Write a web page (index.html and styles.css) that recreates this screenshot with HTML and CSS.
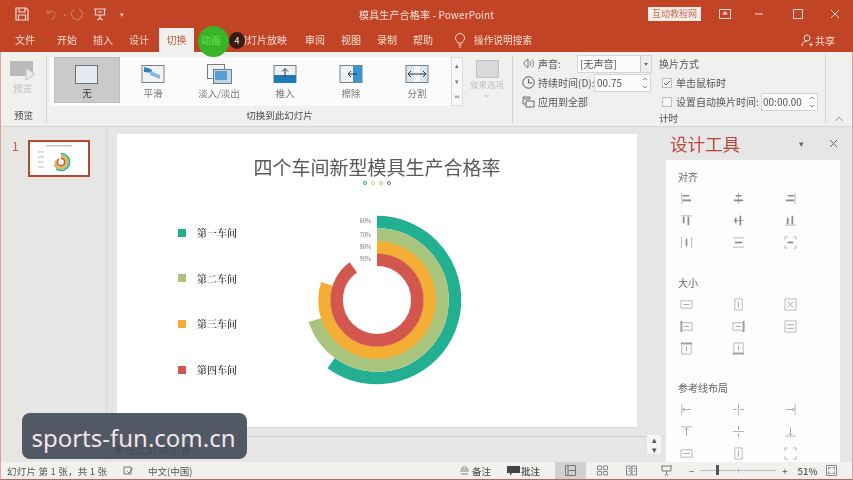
FILE: index.html
```html
<!DOCTYPE html>
<html lang="zh-CN">
<head>
<meta charset="utf-8">
<title>模具生产合格率 - PowerPoint</title>
<link rel="stylesheet" href="styles.css">
</head>
<body>
<div class="app">
  <header class="titlebar">
    <div class="qat">
      <svg class="q-save" width="14" height="14" viewBox="0 0 14 14"><path d="M1 1h10l2 2v10H1zM4 1v4h6V1M3.500 13V8h7v5" fill="none" stroke="#f6dcd4" stroke-width="1.200"/></svg>
      <svg class="q-undo" width="14" height="14" viewBox="0 0 14 14"><path d="M3 2v4h4M3 6c3-3 9-2 8 3-.4 2-2 3-4 4" fill="none" stroke="#cf6a50" stroke-width="1.300"/></svg>
      <span class="q-sep">·</span>
      <svg class="q-redo" width="14" height="14" viewBox="0 0 14 14"><path d="M9 2a5.500 5.500 0 1 1-5 .5" fill="none" stroke="#d4765c" stroke-width="1.300"/></svg>
      <svg class="q-show" width="14" height="14" viewBox="0 0 14 14"><path d="M1 2h12M2.500 2v6h9V2M7 8v3M4.500 13 7 11l2.500 2M5 5h4" fill="none" stroke="#f6dcd4" stroke-width="1.200"/></svg>
      <span class="q-more">▾</span>
    </div>
    <div class="doc-title">模具生产合格率 - PowerPoint</div>
    <div class="win">
      <span class="login">互动教程网</span>
      <svg class="w-rb" width="12" height="10" viewBox="0 0 12 10"><path d="M.500.500h11v9H.500z" fill="none" stroke="#f6dcd4"/><path d="M6 2 9 5.500H3z" fill="#f6dcd4"/></svg>
      <svg class="w-min" width="10" height="10" viewBox="0 0 10 10"><path d="M1 5h8" stroke="#f6dcd4"/></svg>
      <svg class="w-max" width="10" height="10" viewBox="0 0 10 10"><path d="M.500.500h9v9h-9z" fill="none" stroke="#f6dcd4"/></svg>
      <svg class="w-close" width="10" height="10" viewBox="0 0 10 10"><path d="m1 1 8 8M9 1l-8 8" stroke="#f6dcd4"/></svg>
    </div>
  </header>

  <nav class="tabs">
    <span class="tab tab-file">文件</span>
    <span class="tab">开始</span>
    <span class="tab">插入</span>
    <span class="tab">设计</span>
    <span class="tab tab-active">切换</span>
    <span class="tab tab-anim"><i class="spot"></i><b class="tab-anim-text">动画</b></span>
    <span class="tab tab-show"><i class="badge">4</i>幻灯片放映</span>
    <span class="tab">审阅</span>
    <span class="tab">视图</span>
    <span class="tab">录制</span>
    <span class="tab">帮助</span>
    <svg class="bulb" width="12" height="15" viewBox="0 0 12 15"><path d="M4 10C3 8 1.500 7.500 1.500 5a4.500 4.500 0 0 1 9 0c0 2.500-1.500 3-2.500 5zM4.500 12h3M5 14h2" fill="none" stroke="#f6dcd4"/></svg>
    <span class="search">操作说明搜索</span>
    <span class="share">
      <svg width="13" height="13" viewBox="0 0 13 13"><path d="M6 1a3 3 0 1 1 0 6 3 3 0 0 1 0-6M1 12c0-3 2-5 5-5M8 10.500h4M10 8.500v4" fill="none" stroke="#f6dcd4"/></svg>共享
    </span>
  </nav>

  <section class="ribbon">
    <div class="group group-preview">
      <div class="group-body preview-body">
        <svg width="26" height="22" viewBox="0 0 26 22"><rect x="0" y="1" width="23" height="15" fill="#b9bbbb"/><path d="M16 8v12l9-6z" fill="#e8ecec" stroke="#bcc0c0"/></svg>
        <span class="dim">预览</span>
      </div>
      <div class="group-label">预览</div>
    </div>
    <div class="group group-trans">
      <div class="group-body trans-body">
        <div class="gallery">
          <div class="g-item g-selected">
            <svg width="34" height="26" viewBox="0 0 34 26"><rect x="10.500" y="5.500" width="22" height="18" transform="translate(-5 -1)" fill="#e4ecf1" stroke="#6c7278"/></svg>
            <span>无</span>
          </div>
          <div class="g-item">
            <svg width="34" height="26" viewBox="0 0 34 26"><rect x="6" y="4.500" width="22" height="17" fill="#f1f4f5" stroke="#7a8186"/><path d="m8 6 7 2 2 4-9-1z" fill="#2f7fb8"/><path d="m14 10 10 4v4l-10-4z" fill="#86b9dc"/></svg>
            <span>平滑</span>
          </div>
          <div class="g-item">
            <svg width="34" height="26" viewBox="0 0 34 26"><rect x="5.500" y="3.500" width="17" height="14" fill="#f1f4f5" stroke="#757b80"/><rect x="11.500" y="8.500" width="18" height="14" fill="#bcd7ea" stroke="#757b80"/><rect x="13" y="10" width="12" height="9" fill="#5a9fd2"/></svg>
            <span>淡入/淡出</span>
          </div>
          <div class="g-item">
            <svg width="34" height="26" viewBox="0 0 34 26"><rect x="6" y="4.500" width="22" height="17" fill="#eef2f4" stroke="#7a8186"/><rect x="6" y="14" width="22" height="8" fill="#1f7ab8"/><path d="M17 16V8M14 10.500 17 7.500l3 3" fill="none" stroke="#333"/></svg>
            <span>推入</span>
          </div>
          <div class="g-item">
            <svg width="34" height="26" viewBox="0 0 34 26"><rect x="6" y="4.500" width="22" height="17" fill="#eef2f4" stroke="#7a8186"/><rect x="19" y="5" width="9" height="16" fill="#3d93cf"/><path d="M23 13h-9M17 10l-3 3 3 3" fill="none" stroke="#333"/></svg>
            <span>擦除</span>
          </div>
          <div class="g-item">
            <svg width="34" height="26" viewBox="0 0 34 26"><rect x="6" y="4.500" width="22" height="17" fill="#d8e7f1" stroke="#7a8186"/><rect x="14" y="5" width="6" height="16" fill="#f4f7f8"/><path d="M8 13h18M11 10l-3 3 3 3M23 10l3 3-3 3" fill="none" stroke="#333"/></svg>
            <span>分割</span>
          </div>
        </div>
        <div class="g-scroll">
          <span>▴</span><span>▾</span><span>≂</span>
        </div>
        <div class="effect">
          <i class="effect-box"></i>
          <span class="dim">效果选项</span>
          <span class="dim effect-caret">⌄</span>
        </div>
      </div>
      <div class="group-label">切换到此幻灯片</div>
    </div>
    <div class="group group-timing">
      <div class="timing-body">
        <div class="sound">
          <div class="row">
            <svg class="ico" width="13" height="13" viewBox="0 0 13 13"><path d="M6 2v9L2 7.500V5.500zM8 4c1 1 1 4 0 5M10 2.500c2 2 2 6 0 8" fill="none" stroke="#777"/></svg>
            <span class="lab lab-sound">声音:</span>
            <span class="combo">[无声音]<svg class="combo-arrow" width="11" height="16" viewBox="0 0 11 16"><path d="M3.500 7h4L5.500 10z" fill="#555"/></svg></span>
          </div>
          <div class="row">
            <svg class="ico" width="13" height="13" viewBox="0 0 13 13"><circle cx="6.500" cy="6.500" r="5.700" fill="none" stroke="#555"/><path d="M6.500 3v4H10" fill="none" stroke="#555"/></svg>
            <span class="lab lab-dur">持续时间(D):</span>
            <span class="spin spin-dur">00.75<svg class="spin-arrows" width="8" height="14" viewBox="0 0 8 14"><path d="m2 4 2-2 2 2M2 10l2 2 2-2" fill="none" stroke="#888"/></svg></span>
          </div>
          <div class="row">
            <svg class="ico" width="13" height="13" viewBox="0 0 13 13"><path d="M1 2h7v2H1zM1 5v4h3M4 6h8v6H4z" fill="#eef0f0" stroke="#666"/></svg>
            <span class="lab">应用到全部</span>
          </div>
        </div>
        <div class="advance">
          <div class="adv-title">换片方式</div>
          <div class="row adv-row">
            <i class="check"><svg width="10" height="10" viewBox="0 0 10 10"><path d="m2 5 2 2 4-4" fill="none" stroke="#555"/></svg></i>
            <span class="lab">单击鼠标时</span>
          </div>
          <div class="row adv-row">
            <i class="check"></i>
            <span class="lab lab-auto">设置自动换片时间:</span>
            <span class="spin spin-auto">00:00.00<svg class="spin-arrows" width="8" height="14" viewBox="0 0 8 14"><path d="m2 4 2-2 2 2M2 10l2 2 2-2" fill="none" stroke="#888"/></svg></span>
          </div>
          <div class="group-label timing-label">计时</div>
        </div>
      </div>
    </div>
    <div class="collapse">
      <svg width="10" height="6" viewBox="0 0 10 6"><path d="m1 5 4-4 4 4" fill="none" stroke="#999"/></svg>
    </div>
  </section>

  <main class="work">
    <aside class="thumbs">
      <span class="thumb-no">1</span>
      <div class="thumb">
        <svg width="58" height="33" viewBox="0 0 58 33">
          <rect x="16" y="3" width="26" height="1.500" fill="#c4c4c4"/>
          <path d="M8 10h6M8 15h6M8 20h6M8 25h6" stroke="#bbb"/>
          <g fill="none" stroke-width="1.700" transform="rotate(-90 31 20)">
            <circle cx="31" cy="20" r="8.500" stroke="#23b092" pathLength="100" stroke-dasharray="60 100"/>
            <circle cx="31" cy="20" r="6.900" stroke="#a9c47c" pathLength="100" stroke-dasharray="70 100"/>
            <circle cx="31" cy="20" r="5.300" stroke="#f4ae35" pathLength="100" stroke-dasharray="80 100"/>
            <circle cx="31" cy="20" r="3.700" stroke="#d4574f" pathLength="100" stroke-dasharray="90 100"/>
          </g>
        </svg>
      </div>
    </aside>

    <div class="center">
      <div class="stage">
        <article class="slide">
          <h1 class="slide-title">四个车间新型模具生产合格率</h1>
          <div class="dots">
            <i class="dot dot-a"></i><i class="dot dot-b"></i><i class="dot dot-c"></i><i class="dot dot-d"></i>
          </div>
          <div class="slide-body">
            <ul class="legend">
              <li><i class="sw sw-a"></i>第一车间</li>
              <li><i class="sw sw-b"></i>第二车间</li>
              <li><i class="sw sw-c"></i>第三车间</li>
              <li><i class="sw sw-d"></i>第四车间</li>
            </ul>
            <svg class="chart" width="200" height="200" viewBox="0 0 200 200">
              <g fill="none" transform="rotate(-90 100 100)">
                <circle cx="100" cy="100" r="78" stroke="#23b092" stroke-width="12.500" pathLength="100" stroke-dasharray="60 100"/>
                <circle cx="100" cy="100" r="65" stroke="#a9c47c" stroke-width="13.500" pathLength="100" stroke-dasharray="70 100"/>
                <circle cx="100" cy="100" r="52.500" stroke="#f4ae35" stroke-width="12.500" pathLength="100" stroke-dasharray="80 100"/>
                <circle cx="100" cy="100" r="40.300" stroke="#d4574f" stroke-width="12.500" pathLength="100" stroke-dasharray="90 100"/>
              </g>
              <g class="chart-pct">
                <text x="94" y="23">60%</text>
                <text x="94" y="37">70%</text>
                <text x="94" y="49">80%</text>
                <text x="94" y="61">90%</text>
              </g>
            </svg>
          </div>
        </article>
        <div class="v-scroll"><span>▴</span><span>▾</span></div>
      </div>
      <div class="notes">单击此处添加备注</div>
    </div>

    <aside class="pane">
      <div class="pane-head">
        <span class="pane-title">设计工具</span>
        <span class="pane-drop">▾</span>
        <svg class="pane-x" width="9" height="9" viewBox="0 0 9 9"><path d="m1 1 7 7M8 1 1 8" stroke="#666"/></svg>
      </div>
      <div class="pane-body">
        <section class="tool-sec">
          <h2>对齐</h2>
          <div class="tool-grid">
            <svg viewBox="0 0 14 14"><path d="M2 1v12" class="l"/><path d="M3 4h7M3 9h9" class="b"/></svg>
            <svg viewBox="0 0 14 14"><path d="M7 1v12" class="l"/><path d="M4 4h6M2 9h10" class="b"/></svg>
            <svg viewBox="0 0 14 14"><path d="M12 1v12" class="l"/><path d="M4 4h7M2 9h9" class="b"/></svg>
            <svg viewBox="0 0 14 14"><path d="M1 2h12" class="l"/><path d="M4 3v7M9 3v9" class="b"/></svg>
            <svg viewBox="0 0 14 14"><path d="M1 7h12" class="l"/><path d="M4 4v6M9 2v10" class="b"/></svg>
            <svg viewBox="0 0 14 14"><path d="M1 12h12" class="l"/><path d="M4 4v7M9 2v9" class="b"/></svg>
            <svg viewBox="0 0 14 14"><path d="M1.500 1v12M12.500 1v12" class="l"/><path d="M7 3v8" class="b"/></svg>
            <svg viewBox="0 0 14 14"><path d="M1 2h12M1 12h12" class="l"/><path d="M3 7h8" class="b"/></svg>
            <svg viewBox="0 0 14 14"><path d="M1 4V1h3M10 1h3v3M13 10v3h-3M4 13H1v-3" class="l"/><path d="M4 7h6" class="b"/></svg>
          </div>
        </section>
        <section class="tool-sec">
          <h2>大小</h2>
          <div class="tool-grid">
            <svg viewBox="0 0 14 14"><path d="M1 3h12v8H1z" class="l"/><path d="M3.500 7h7" class="a"/></svg>
            <svg viewBox="0 0 14 14"><path d="M3 1h8v12H3z" class="l"/><path d="M7 3.500v7" class="a"/></svg>
            <svg viewBox="0 0 14 14"><path d="M1 1h12v12H1z" class="l"/><path d="m4 4 6 6M10 4l-6 6" class="a"/></svg>
            <svg viewBox="0 0 14 14"><path d="M1.500 1v12" class="b"/><path d="M2 3h11v8H2z" class="l"/><path d="M10 7H4.500" class="a"/></svg>
            <svg viewBox="0 0 14 14"><path d="M12.500 1v12" class="b"/><path d="M1 3h11v8H1z" class="l"/><path d="M4 7h5.500" class="a"/></svg>
            <svg viewBox="0 0 14 14"><path d="M1 1h12v12H1z" class="l"/><path d="M3 5h8M3 9h8" class="a"/></svg>
            <svg viewBox="0 0 14 14"><path d="M1 1.500h12" class="b"/><path d="M2 2h10v11H2z" class="l"/><path d="M7 10V4.500" class="a"/></svg>
            <svg viewBox="0 0 14 14"><path d="M1 12.500h12" class="b"/><path d="M2 1h10v11H2z" class="l"/><path d="M7 4v5.500" class="a"/></svg>
          </div>
        </section>
        <section class="tool-sec">
          <h2>参考线布局</h2>
          <div class="tool-grid">
            <svg viewBox="0 0 14 14"><path d="M2 1v12" class="l"/><path d="M12 7H3M5 5 3 7l2 2" class="a"/></svg>
            <svg viewBox="0 0 14 14"><path d="M7 1v12" class="l"/><path d="M1 7h4M9 7h4" class="a"/></svg>
            <svg viewBox="0 0 14 14"><path d="M12 1v12" class="l"/><path d="M2 7h9M9 5l2 2-2 2" class="a"/></svg>
            <svg viewBox="0 0 14 14"><path d="M1 2h12" class="l"/><path d="M7 12V3M5 5l2-2 2 2" class="a"/></svg>
            <svg viewBox="0 0 14 14"><path d="M1 7h12" class="l"/><path d="M7 1v4M7 9v4" class="a"/></svg>
            <svg viewBox="0 0 14 14"><path d="M1 12h12" class="l"/><path d="M7 2v9M5 9l2 2 2-2" class="a"/></svg>
            <svg viewBox="0 0 14 14"><path d="M1 3h12v8H1z" class="l"/><path d="M3.500 7h7" class="a"/></svg>
            <svg viewBox="0 0 14 14"><path d="M3 1h8v12H3z" class="l"/><path d="M7 3.500v7" class="a"/></svg>
            <svg viewBox="0 0 14 14"><path d="M1 4V1h3M10 1h3v3M13 10v3h-3M4 13H1v-3" class="l"/></svg>
          </div>
        </section>
      </div>
    </aside>
  </main>

  <footer class="status">
    <span class="st-pos">幻灯片 第 1 张，共 1 张</span>
    <svg class="st-spell" width="11" height="11" viewBox="0 0 11 11"><path d="M1 2h7v7H1zM4 6l2 2 4-5" fill="none" stroke="#777"/></svg>
    <span class="st-lang">中文(中国)</span>
    <span class="st-notes">
      <svg width="9" height="9" viewBox="0 0 9 9"><path d="M4.500 0 1 3h7zM0 5h9M1 8h7" fill="none" stroke="#888"/></svg>备注
    </span>
    <span class="st-comments">
      <svg width="13" height="10" viewBox="0 0 13 10"><path d="M0 0h13v7H5L3 10V7H0z" fill="#444"/></svg>批注
    </span>
    <span class="view view-on"><svg width="11" height="11" viewBox="0 0 11 11"><path d="M.500.500h10v10H.500zM3 .500v10M3 5.500h7" fill="none" stroke="#777"/></svg></span>
    <span class="view"><svg width="11" height="11" viewBox="0 0 11 11"><path d="M.500 1h4v3.500h-4zM6.500 1h4v3.500h-4zM.500 6.500h4V10h-4zM6.500 6.500h4V10h-4z" fill="none" stroke="#888"/></svg></span>
    <span class="view"><svg width="11" height="11" viewBox="0 0 11 11"><path d="M.500 1h4.500v9H.500zM6 1h4.500v9H6zM2 3.500h2M2 6h2M7.500 3.500h2M7.500 6h2" fill="none" stroke="#888"/></svg></span>
    <span class="view view-show"><svg width="11" height="11" viewBox="0 0 11 11"><path d="M0 1h11M1 1v5h9V1M5.500 6v3M3.500 10.500l2-1.500 2 1.500" fill="none" stroke="#777"/></svg></span>
    <span class="zoom-minus">−</span>
    <span class="slider"><i class="tick"></i><i class="knob"></i></span>
    <span class="zoom-plus">+</span>
    <span class="zoom-val">51%</span>
    <svg class="st-fit" width="11" height="11" viewBox="0 0 11 11"><path d="M.500.500h10v10H.500zM2.500 4.500v-2h2M6.500 2.500h2v2M8.500 6.500v2h-2M4.500 8.500h-2v-2" fill="none" stroke="#888"/></svg>
  </footer>
</div>
<div class="watermark">sports-fun.com.cn</div>
</body>
</html>
```

FILE: styles.css
```css
* { box-sizing: border-box; }
html, body { margin: 0; padding: 0; }
body {
  width: 853px;
  height: 480px;
  overflow: hidden;
  position: relative;
  background: #eee;
  font-family: "Noto Sans CJK SC", "Liberation Sans", sans-serif;
  font-size: 10px;
  color: #444;
}
i { font-style: normal; }
.app {
  width: 853px;
  height: 480px;
  display: flex;
  flex-direction: column;
  filter: blur(.55px);
  border-left: 1px solid #d9a49a;
  border-right: 1px solid #d9a49a;
  border-bottom: 1px solid #b9695a;
}

/* title bar */
.titlebar {
  height: 28px;
  flex: none;
  margin: 0 -1px;
  background: #c04425;
  color: #f8e3dc;
  display: flex;
  align-items: center;
  position: relative;
}
.qat { display: flex; align-items: center; width: 359px; padding-left: 15px; }
.q-undo { margin-left: 15px; }
.q-sep { margin-left: 2px; color: #d4765c; width: 10px; }
.q-show { margin-left: 9px; }
.q-more { margin-left: 13px; font-size: 7px; color: #f0c8bc; }
.doc-title { width: 289px; font-size: 10px; letter-spacing: .15px; }
.win { display: flex; align-items: center; }
.login {
  width: 53px;
  height: 14px;
  line-height: 14px;
  background: #f7eeea;
  color: #c96a52;
  text-align: center;
  font-size: 9px;
}
.w-rb { margin-left: 18px; }
.w-min { margin-left: 23px; }
.w-max { margin-left: 29px; }
.w-close { margin-left: 27px; }

/* tabs */
.tabs {
  height: 24px;
  flex: none;
  margin: 0 -1px;
  padding-left: 7px;
  background: #c04425;
  color: #f6dcd4;
  display: flex;
  align-items: center;
}
.tab { padding: 0 8px; line-height: 24px; white-space: nowrap; position: relative; }
.tab-file { margin-right: 6px; }
.tab-active {
  margin-left: 2px;
  width: 35px;
  padding: 0 7.500px;
  background: #f0f0ee;
  color: #b85a42;
}
.tab-anim { padding: 0 7px; width: 36px; }
.tab-anim-text { position: relative; font-weight: 400; color: #6fdc5e; }
.spot {
  position: absolute;
  left: 4px;
  top: -2px;
  width: 31px;
  height: 31px;
  border-radius: 50%;
  background: #37b526;
}
.tab-show { padding-left: 7px; padding-right: 10px; }
.badge {
  position: absolute;
  left: -1px;
  top: 4px;
  width: 16px;
  height: 17px;
  line-height: 17px;
  text-align: center;
  border-radius: 50%;
  background: #381c14;
  color: #f4e8e2;
  font-size: 9px;
  z-index: 1;
}
.bulb { margin-left: 13px; }
.search { margin-left: 8px; font-size: 9.700px; }
.share { margin-left: auto; margin-right: 18px; display: flex; align-items: center; gap: 1px; }

/* ribbon */
.ribbon {
  height: 75px;
  flex: none;
  background: #f0f1ef;
  border-bottom: 1px solid #d6d6d4;
  display: flex;
  padding-top: 3px;
}
.group { display: flex; flex-direction: column; border-right: 1px solid #d5d6d4; margin-bottom: 3px; }
.group-body { flex: 1; min-height: 0; }
.group-label { height: 15px; line-height: 15px; text-align: center; color: #4a4a4a; font-size: 9.500px; }
.dim { color: #bcbfbf; font-size: 9.500px; }
.group-preview { width: 46px; }
.preview-body { display: flex; flex-direction: column; align-items: center; padding-top: 5px; padding-right: 2px; }
.preview-body span { margin-top: -1px; }
.group-trans { width: 466px; }
.trans-body { display: flex; padding-left: 3px; }
.gallery {
  width: 401px;
  height: 49px;
  margin-top: 2px;
  padding-left: 4px;
  background: #fbfbfb;
  display: flex;
}
.g-item {
  width: 66px;
  height: 46px;
  display: flex;
  flex-direction: column;
  align-items: center;
  padding-top: 4px;
  color: #777;
  font-size: 9.500px;
  line-height: 13px;
}
.g-selected { background: #c9cac9; color: #333; border: 1px solid #bcbdbc; padding-top: 3px; }
.g-scroll {
  width: 12px;
  height: 49px;
  margin-top: 2px;
  background: #f8f8f8;
  border: 1px solid #dcdcdc;
  display: flex;
  flex-direction: column;
  font-size: 7px;
  line-height: 15.600px;
  text-align: center;
  color: #777;
}
.effect { width: 46px; margin-left: 1px; display: flex; flex-direction: column; align-items: center; padding-top: 5px; font-size: 9px; }
.effect-box { width: 23px; height: 18px; background: #d8d9d9; border: 1px solid #c2c3c3; }
.effect span { line-height: 12px; font-size: 8.500px; }
.effect-caret { line-height: 6px !important; }

.group-timing { width: 313px; margin-top: -1px; }
.timing-body { display: flex; padding-left: 9px; flex: 1; }
.row { display: flex; align-items: center; height: 19px; }
.sound { width: 137px; }
.ico { flex: none; margin-right: 2px; }
.lab { color: #555; font-size: 10px; white-space: nowrap; margin-left: 1px; }
.lab-sound { width: 39px; }
.lab-dur { width: 56px; }
.combo, .spin {
  background: #fbfbfb;
  border: 1px solid #d4d4d4;
  height: 18px;
  line-height: 16px;
  padding-left: 2px;
  color: #555;
  font-size: 10px;
  position: relative;
  display: block;
}
.combo { width: 75px; }
.combo-arrow {
  position: absolute;
  right: 0;
  top: 0;
  border-left: 1px solid #c8c8c8;
  background: #ececec;
}
.spin-dur { width: 57px; }
.spin-arrows {
  position: absolute;
  right: 1px;
  top: 1px;
}
.advance { flex: 1; position: relative; display: flex; flex-direction: column; }
.adv-title { height: 19px; line-height: 19px; color: #555; }
.adv-row { padding-left: 3px; }
.check {
  width: 10px;
  height: 10px;
  background: #f6f6f6;
  border: 1px solid #bdbdbd;
  display: block;
  margin-right: 3px;
  flex: none;
  line-height: 0;
}
.check svg { margin: -1px; }
.lab-auto { width: 85px; }
.spin-auto { width: 57px; padding-left: 1px; }
.timing-label { text-align: left; margin-top: auto; }
.collapse { flex: 1; display: flex; align-items: flex-end; justify-content: center; padding-bottom: 4px; }

/* work area */
.work { flex: 1; min-height: 0; display: flex; background: #e6e6e5; }
.thumbs { width: 106px; flex: none; display: flex; padding: 13px 0 0 11px; border-right: 1px solid #dadada; }
.thumb-no { color: #c8553f; font-size: 12px; line-height: 12px; width: 16px; }
.thumb { width: 62px; height: 37px; background: #fff; border: 2px solid #b5482e; line-height: 0; }

.center { width: 558px; flex: none; display: flex; flex-direction: column; }
.stage { height: 310px; flex: none; padding: 7px 0 0 10px; display: flex; border-bottom: 1px solid #cfd3d0; }
.slide {
  width: 520px;
  height: 294px;
  background: #fff;
  border-bottom: 1px solid #d9d9d9;
  display: flex;
  flex-direction: column;
  align-items: stretch;
}
.slide-title {
  margin: 20px 0 0;
  font-size: 19px;
  line-height: 26px;
  font-weight: 400;
  color: #595959;
  text-align: center;
}
.dots { display: flex; justify-content: center; gap: 4px; margin-top: 1px; height: 4px; margin-left: -1px; }
.dot { width: 4px; height: 4px; border-radius: 50%; border: 1px solid; }
.dot-a { border-color: #23b092; }
.dot-b { border-color: #c6d4a8; }
.dot-c { border-color: #e0bb82; }
.dot-d { border-color: #b5574f; }
.slide-body { display: flex; padding: 15px 0 0 61px; }
.legend {
  list-style: none;
  margin: 0;
  padding: 25px 0 0;
  width: 99px;
  display: flex;
  flex-direction: column;
  gap: 30.700px;
  font-family: "Noto Serif CJK SC", "Noto Sans CJK SC", serif;
  font-size: 10px;
  line-height: 15px;
  color: #3d3d3d;
}
.legend li { display: flex; align-items: center; gap: 11px; font-weight: 600; }
.sw { width: 8px; height: 8px; display: block; }
.sw-a { background: #23b092; }
.sw-b { background: #a9c47c; }
.sw-c { background: #f4ae35; }
.sw-d { background: #d4574f; }
.chart { display: block; flex: none; }
.chart-pct { font-size: 5.500px; fill: #777; text-anchor: end; }
.v-scroll {
  margin: auto 0 -18px 10px;
  width: 14px;
  display: flex;
  flex-direction: column;
  gap: 1px;
  font-size: 9px;
  line-height: 9px;
  text-align: center;
  color: #555;
  background: #f6f6f5;
  position: relative;
}
.notes {
  flex: 1;
  padding: 5px 0 0 7px;
  color: #333;
  font-size: 11px;
  line-height: 14px;
  background: #e8e6e4;
}

/* right pane */
.pane { flex: 1; min-width: 0; display: flex; flex-direction: column; background: #e6e6e6; min-height: 0; overflow: hidden; }
.pane-head { height: 33px; flex: none; display: flex; align-items: center; padding-left: 5px; }
.pane-title { font-size: 17.500px; color: #b9443a; width: 129px; line-height: 33px; }
.pane-drop { font-size: 9px; color: #666; width: 30px; }
.pane-body { flex: 1; min-height: 0; margin: 0 12px 0 1px; background: #fdfdfd; overflow: hidden; }
.tool-sec { padding: 8px 0 0 14px; height: 105px; }
.tool-sec + .tool-sec { padding-top: 9px; }
.tool-sec h2 { margin: 0 0 2px -2px; font-size: 10px; line-height: 17px; font-weight: 400; color: #666; }
.tool-grid { display: grid; grid-template-columns: repeat(3, 52px); grid-auto-rows: 22px; align-items: center; }
.tool-grid svg { width: 13px; height: 13px; display: block; }
.l { fill: none; stroke: #b4b4b4; stroke-width: 1; }
.b { fill: none; stroke: #8a8a8a; stroke-width: 1.800; }
.a { fill: none; stroke: #a4a4a4; stroke-width: 1; }

/* status */
.status {
  height: 17px;
  flex: none;
  background: #f1f1ef;
  display: flex;
  align-items: center;
  font-size: 9.500px;
  color: #555;
  padding-left: 6px;
}
.st-pos { width: 116px; letter-spacing: .2px; }
.st-spell { margin-right: 14px; }
.st-lang { width: 312px; }
.st-notes { display: flex; align-items: center; gap: 3px; width: 47px; color: #444; }
.st-comments { display: flex; align-items: center; gap: 1px; width: 48px; color: #444; font-weight: 500; }
.view { width: 29px; height: 17px; display: flex; align-items: center; justify-content: center; }
.view-on { width: 31px; background: #cfd0cf; margin-right: 2px; }
.view-show { margin-left: 6px; }
.zoom-minus { margin-left: 8px; }
.slider { width: 76px; height: 1px; margin: 0 6px; background: #bbb; position: relative; }
.knob { position: absolute; left: 16px; top: -5px; width: 3px; height: 10px; background: #555; }
.tick { position: absolute; left: 38px; top: -2px; width: 1px; height: 5px; background: #bbb; }
.zoom-val { margin-left: 10px; width: 28px; font-weight: 500; }
.st-fit { margin-left: 0; }

/* overlay */
.watermark {
  position: absolute;
  left: 22px;
  top: 413px;
  width: 225px;
  height: 46px;
  padding-right: 2px;
  border-radius: 8px;
  background: rgba(70, 78, 90, .93);
  color: #f1e4ee;
  font-family: "Noto Sans", "Open Sans", sans-serif;
  font-size: 24px;
  line-height: 50px;
  text-align: center;
  white-space: nowrap;
}
```
